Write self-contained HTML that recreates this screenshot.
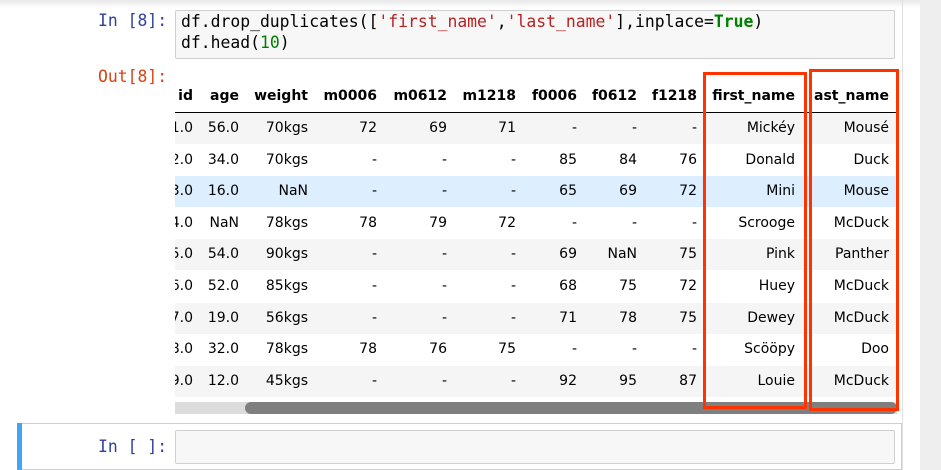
<!DOCTYPE html>
<html><head><meta charset="utf-8"><style>
body{margin:0;width:941px;height:470px;overflow:hidden;background:#fff;position:relative;font-family:"DejaVu Sans","Liberation Sans",sans-serif;}
.a{position:absolute;}
.mono{font-family:"DejaVu Sans Mono","Liberation Mono",monospace;font-size:16.4px;}
.row{position:absolute;left:175px;width:722px;height:31px;overflow:hidden;}
.c{position:absolute;top:0;line-height:31px;font-size:14px;color:#000;text-align:right;white-space:nowrap;}
.h{font-weight:bold;}
</style></head><body>
<div class="a" style="left:0;top:0;width:941px;height:8px;background:linear-gradient(#e8e8e8,#fff)"></div>
<div class="a" style="left:920px;top:0;width:21px;height:470px;background:#eeeeee"></div>
<div class="a" style="left:902px;top:0;width:1px;height:470px;background:#e0e0e0"></div>

<div class="a mono" style="left:98px;top:10px;color:#303F9F;line-height:21px">In [8]:</div>
<div class="a" style="left:175px;top:10px;width:718px;height:47px;background:#f7f7f7;border:1px solid #cfcfcf;border-radius:2px"></div>
<div class="a mono" style="left:181px;top:11px;line-height:21px;color:#000;white-space:pre">df.drop_duplicates([<span style="color:#BA2121">'first_name'</span>,<span style="color:#BA2121">'last_name'</span>],inplace=<span style="color:#008000;font-weight:bold">True</span>)
df.head(<span style="color:#008000">10</span>)</div>
<div class="a mono" style="left:98px;top:66px;color:#D84315;line-height:21px">Out[8]:</div>

<div id="t"></div>
<div class="a" style="left:175px;top:402px;width:722px;height:12px;background:#dcdcdc"></div>
<div class="a" style="left:245px;top:402px;width:652px;height:12px;background:#7f7f7f;border-radius:6px"></div>

<div class="a" style="left:703px;top:72px;width:98px;height:331px;border:3px solid #ff3300"></div>
<div class="a" style="left:809px;top:69px;width:84px;height:336px;border:3px solid #ff3300"></div>

<div class="a" style="left:17px;top:423px;width:5px;height:47px;background:#42A5F5"></div>
<div class="a" style="left:22px;top:423px;width:880px;height:47px;border:1px solid #cfcfcf;border-left:none;box-sizing:border-box"></div>
<div class="a mono" style="left:98px;top:436px;color:#303F9F;line-height:21px">In [ ]:</div>
<div class="a" style="left:175px;top:430px;width:718px;height:32px;background:#f7f7f7;border:1px solid #cfcfcf;border-radius:2px"></div>

<script>
var R=[193,239,308,377,447,516,577,637,697,795,889];
var H=["id","age","weight","m0006","m0612","m1218","f0006","f0612","f1218","first_name","ast_name"];
var D=[["1.0","56.0","70kgs","72","69","71","-","-","-","Mickéy","Mousé"],
["2.0","34.0","70kgs","-","-","-","85","84","76","Donald","Duck"],
["3.0","16.0","NaN","-","-","-","65","69","72","Mini","Mouse"],
["4.0","NaN","78kgs","78","79","72","-","-","-","Scrooge","McDuck"],
["5.0","54.0","90kgs","-","-","-","69","NaN","75","Pink","Panther"],
["6.0","52.0","85kgs","-","-","-","68","75","72","Huey","McDuck"],
["7.0","19.0","56kgs","-","-","-","71","78","75","Dewey","McDuck"],
["8.0","32.0","78kgs","78","76","75","-","-","-","Scööpy","Doo"],
["9.0","12.0","45kgs","-","-","-","92","95","87","Louie","McDuck"]];
var s='<div class="row" style="top:81px;height:31px;border-bottom:1px solid #000">';
H.forEach(function(h,i){s+='<div class="c h" style="right:'+(897-R[i])+'px">'+h+'</div>'});
s+='</div>';
D.forEach(function(r,j){var bg=j==2?'#ddeeff':(j%2==0?'#f5f5f5':'#fff');
s+='<div class="row" style="top:'+(113+j*31.6)+'px;background:'+bg+'">';
r.forEach(function(v,i){s+='<div class="c" style="right:'+(897-R[i])+'px">'+v+'</div>'});
s+='</div>';});
document.getElementById('t').innerHTML=s;
</script>
</body></html>
